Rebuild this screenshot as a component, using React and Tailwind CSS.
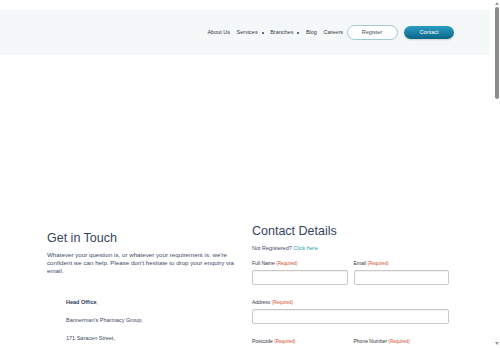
const NavLink = ({ label, dropdown }) => (
  <a className="flex items-center gap-[4px] text-[5.5px] text-[#333a44]">
    {label}
    {dropdown && <span className="w-[2px] h-[2px] rounded-full bg-[#333a44]" />}
  </a>
);

const Field = ({ label, className = '' }) => (
  <div className={`flex flex-col ${className}`}>
    <label className="text-[5px] leading-[8px] text-[#2f3640] h-[8px]">
      {label} <span className="text-[4.5px] text-[#d0502e]">(Required)</span>
    </label>
    <div className="mt-[3px] h-[15px] border border-[#c9c9c9] rounded-[2px] bg-white shadow-[inset_0_1px_1px_rgba(0,0,0,0.06)]" />
  </div>
);

// page scrollbar as it shows in the shot
const Scrollbar = () => (
  <aside className="w-[10px] h-full flex flex-col items-center bg-white">
    <span className="mt-[2px] ml-[3px] w-0 h-0 border-x-[2px] border-x-transparent border-b-[3px] border-b-[#9a9a9a]" />
    <span className="mt-[2px] ml-[3px] w-[4px] h-[92px] rounded-full bg-[#8c8c8c]" />
    <span className="mt-auto mb-[3px] ml-[3px] w-0 h-0 border-x-[2px] border-x-transparent border-t-[3px] border-t-[#9a9a9a]" />
  </aside>
);

const App = () => {
  return (
    <div className="h-screen overflow-hidden flex bg-white font-['Liberation_Sans',Arial,sans-serif]">
      <div className="flex-1 pt-[10px]">
        <header className="h-[45px] bg-[#f5f8f8] flex items-center justify-end pr-[36px]">
          <nav className="flex items-center gap-[6.5px]">
            <NavLink label="About Us" />
            <NavLink label="Services" dropdown />
            <NavLink label="Branches" dropdown />
            <NavLink label="Blog" />
            <NavLink label="Careers" />
            <button className="ml-[-3px] w-[51px] h-[15px] rounded-full border border-[#9ccbd6] bg-white text-[5.5px] text-[#4a525a]">
              Register
            </button>
            <button className="w-[50px] h-[13px] rounded-full bg-gradient-to-b from-[#2a9ec4] to-[#0c6587] text-[5.5px] text-white shadow-[0_1px_2px_rgba(0,0,0,0.15)]">
              Contact
            </button>
          </nav>
        </header>

        <main className="mt-[169px] flex pl-[47px]">
          <section className="w-[192px] pt-[7px]">
            <h1 className="text-[12.5px] leading-[15px] text-[#34445f]">Get in Touch</h1>
            <p className="mt-[5px] text-[6.2px] leading-[8px] text-[#3d4a66]">
              Whatever your question is, or whatever your requirement is, we're confident we can help. Please don't hesitate to drop your enquiry via email.
            </p>
            <div className="mt-[24px] pl-[19px] flex flex-col gap-[10.5px] text-[5.5px] leading-[7.5px] text-[#3d4a66]">
              <p><strong className="text-[#2c3a58]">Head Office</strong>,</p>
              <p>Bannerman's Pharmacy Group,</p>
              <p>171 Saracen Street,</p>
            </div>
          </section>

          <section className="ml-[13px] w-[197px]">
            <h2 className="text-[12.5px] leading-[15px] text-[#34445f]">Contact Details</h2>
            <p className="mt-[5px] text-[5.5px] leading-[8px] text-[#3d4a66]">
              Not Registered? <a className="text-[#22a6a6]">Click here</a>
            </p>
            <div className="mt-[7px] grid grid-cols-2 gap-x-[6px] gap-y-[13px]">
              <Field label="Full Name" />
              <Field label="Email" />
              <Field label="Address" className="col-span-2" />
              <Field label="Postcode" />
              <Field label="Phone Number" />
            </div>
          </section>
        </main>
      </div>
      <Scrollbar />
    </div>
  );
};

export default App;
